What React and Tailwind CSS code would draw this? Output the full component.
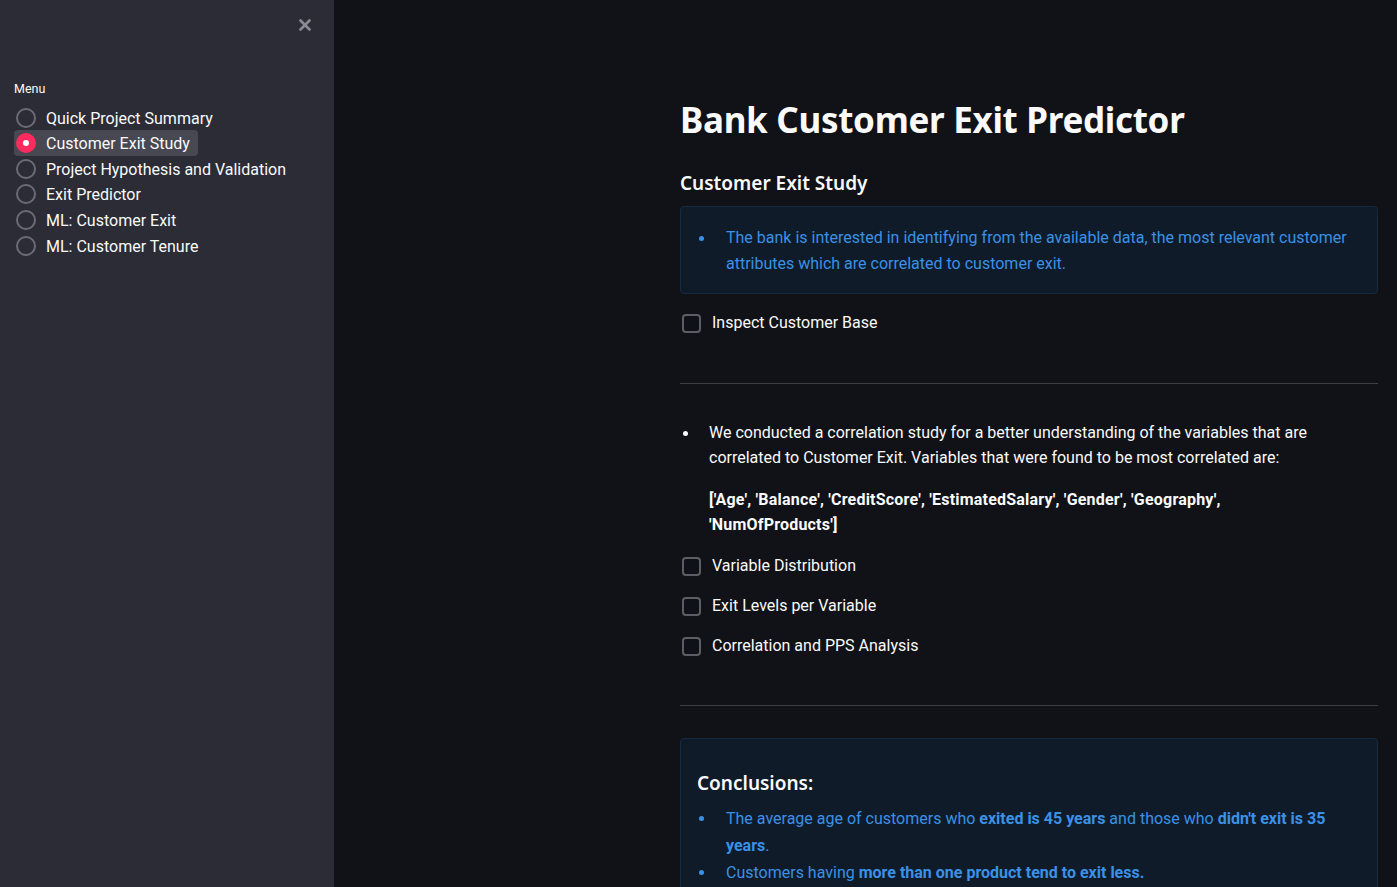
import { X } from "lucide-react";

const menu = [
  "Quick Project Summary",
  "Customer Exit Study",
  "Project Hypothesis and Validation",
  "Exit Predictor",
  "ML: Customer Exit",
  "ML: Customer Tenure",
];

function Radio({ label, active }) {
  return (
    <div
      className={`flex items-center gap-[10px] h-[25.6px] pl-[2px] pr-2 w-fit rounded ${
        active ? "bg-[#474852]" : ""
      }`}
    >
      {active ? (
        <span className="w-5 h-5 rounded-full bg-[#ff2b5e] flex items-center justify-center">
          <span className="w-[6px] h-[6px] rounded-full bg-white" />
        </span>
      ) : (
        <span className="w-5 h-5 rounded-full border-2 border-[#6b6c73]" />
      )}
      <span className="text-[16px] text-[#fafafa] pt-[2px]">{label}</span>
    </div>
  );
}

function Check({ label }) {
  return (
    <div className="flex items-center gap-[11px] h-[20px] pl-[2px]">
      <span className="w-[19px] h-[19px] rounded-[4px] border-2 border-[#5d5e64] bg-[#0e1117]" />
      <span className="text-[16px] text-[#fafafa]">{label}</span>
    </div>
  );
}

function Bullet({ children, indent, dot }) {
  return (
    <div className="flex">
      <span className={`${indent} shrink-0 flex justify-start`}>
        <span className={`mt-[11px] w-[5px] h-[5px] rounded-full ${dot}`} />
      </span>
      <div className="flex-1">{children}</div>
    </div>
  );
}

export default function App() {
  return (
    <div
      className="flex min-h-[887px] h-[887px] overflow-hidden bg-[#111217]"
      style={{ fontFamily: 'Roboto, "Noto Sans", sans-serif' }}
    >
      <aside className="w-[334px] shrink-0 bg-[#2b2c36] relative">
        <div className="flex justify-end pr-[20px] pt-[16px] h-[80px]">
          <X size={18} strokeWidth={3.5} className="text-[#8b8c92]" />
        </div>
        <div className="pl-[14px]">
          <div className="text-[12.5px] text-[#fafafa] mb-[6px]">Menu</div>
          <div className="flex flex-col">
            {menu.map((m) => (
              <Radio key={m} label={m} active={m === "Customer Exit Study"} />
            ))}
          </div>
        </div>
      </aside>

      <main className="flex-1 pl-[346px] pr-[19px] pt-[96px]">
        <h1
          className="text-[35px] font-bold text-[#fafafa] leading-[48px] tracking-[-0.3px]"
          style={{ fontFamily: '"Noto Sans", sans-serif' }}
        >
          Bank Customer Exit Predictor
        </h1>
        <h3
          className="mt-[25px] text-[19px] font-semibold text-[#fafafa] leading-[28px]"
          style={{ fontFamily: '"Noto Sans", sans-serif' }}
        >
          Customer Exit Study
        </h3>
        <div className="mt-[9px] rounded-[4px] border border-[#162a40] bg-[#101b29] px-4 py-[18px] h-[88px]">
          <div className="text-[16px] leading-[26px] text-[#3a91e6]">
            <Bullet indent="w-[29px] pl-[2px]" dot="bg-[#3a91e6]">
              The bank is interested in identifying from the available data, the most relevant customer
              attributes which are correlated to customer exit.
            </Bullet>
          </div>
        </div>
        <div className="mt-[19px]">
          <Check label="Inspect Customer Base" />
        </div>
        <div className="mt-[50px] h-px bg-[#3d3e44]" />

        <div className="mt-[36px] text-[16px] leading-[25px] text-[#fafafa]">
          <Bullet indent="w-[29px] pl-[3px]" dot="bg-[#fafafa]">
            We conducted a correlation study for a better understanding of the variables that are
            correlated to Customer Exit. Variables that were found to be most correlated are:
          </Bullet>
        </div>
        <p className="mt-[17px] pl-[29px] text-[16px] leading-[25px] font-bold text-[#fafafa] tracking-[0.2px]">
          ['Age', 'Balance', 'CreditScore', 'EstimatedSalary', 'Gender', 'Geography',
          <br />
          'NumOfProducts']
        </p>
        <div className="mt-[19px] flex flex-col gap-[20px]">
          <Check label="Variable Distribution" />
          <Check label="Exit Levels per Variable" />
          <Check label="Correlation and PPS Analysis" />
        </div>
        <div className="mt-[49px] h-px bg-[#3d3e44]" />

        <div className="mt-[32px] rounded-[4px] border border-[#162a40] bg-[#101b29] px-4 pt-[29px] h-[200px]">
          <h3
            className="text-[19px] font-semibold text-[#fafafa] leading-[30px]"
            style={{ fontFamily: '"Noto Sans", sans-serif' }}
          >
            Conclusions:
          </h3>
          <div className="mt-[7px] text-[16px] leading-[27px] text-[#3a91e6] flex flex-col">
            <Bullet indent="w-[29px] pl-[2px]" dot="bg-[#3a91e6]">
              The average age of customers who <b>exited is 45 years</b> and those who{" "}
              <b>didn't exit is 35 years</b>.
            </Bullet>
            <Bullet indent="w-[29px] pl-[2px]" dot="bg-[#3a91e6]">
              Customers having <b>more than one product tend to exit less.</b>
            </Bullet>
          </div>
        </div>
      </main>
    </div>
  );
}
